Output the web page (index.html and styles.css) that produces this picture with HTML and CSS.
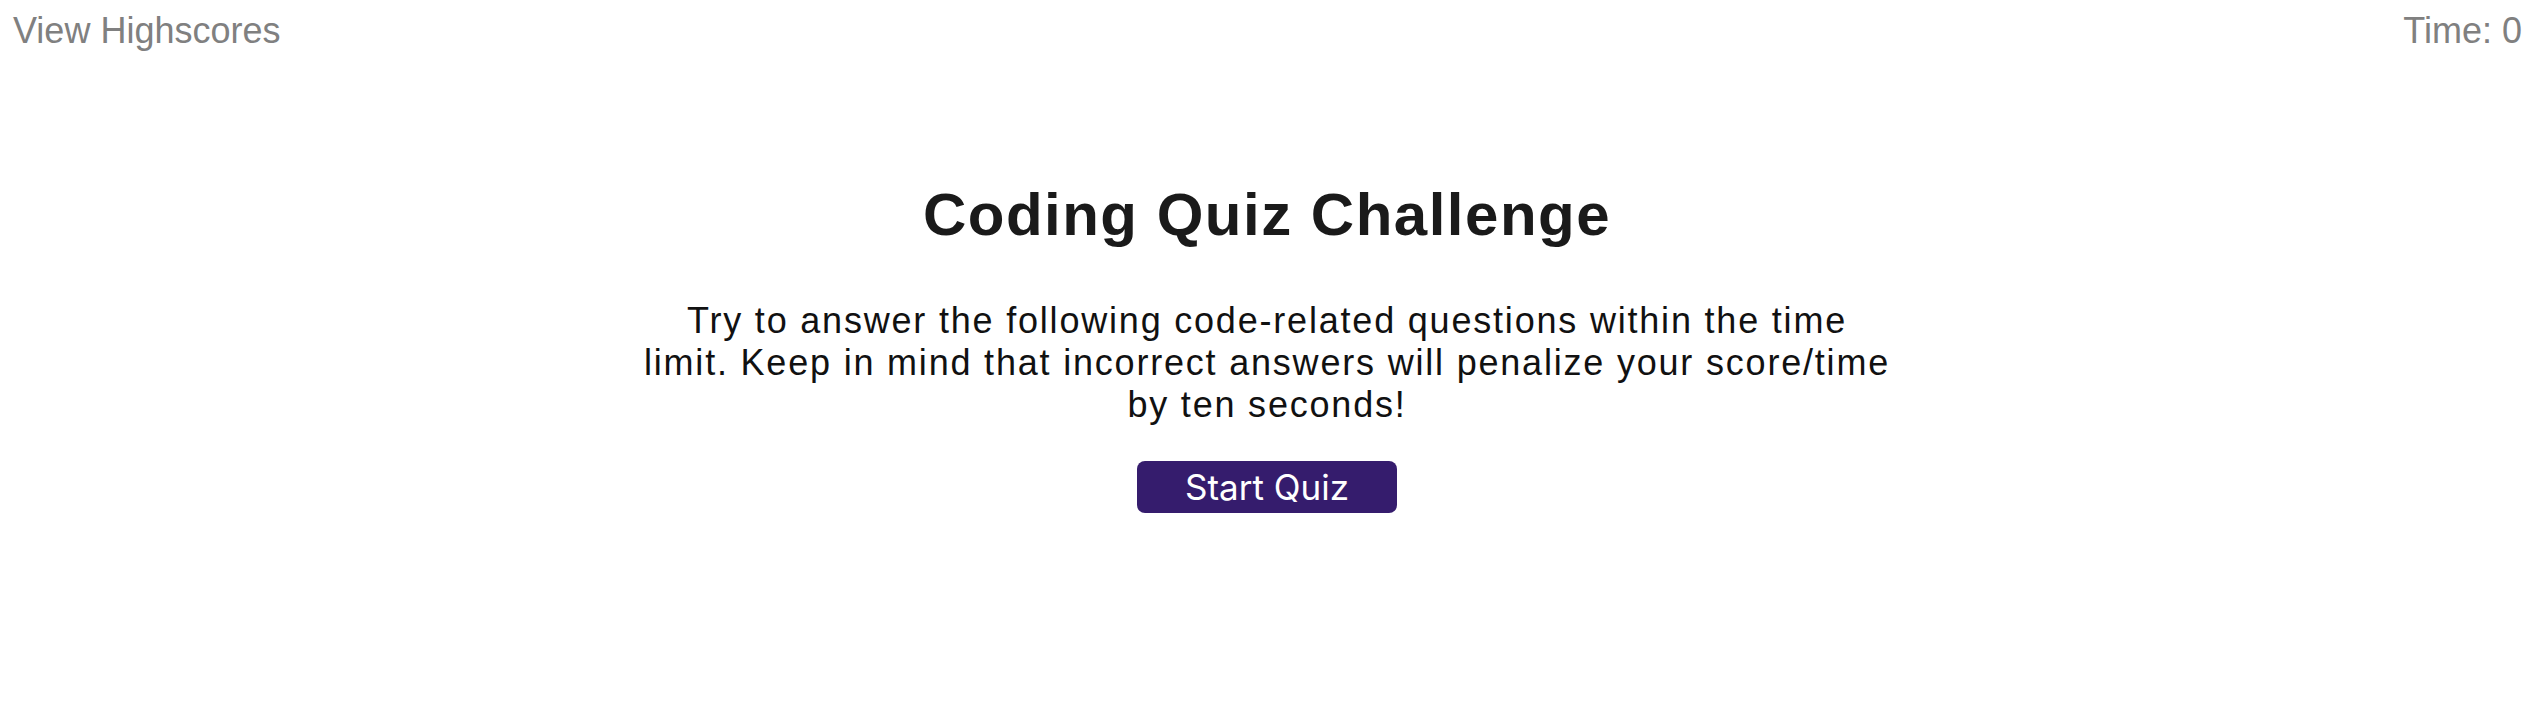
FILE: index.html
```html
<!DOCTYPE html>
<html lang="en">
<head>
<meta charset="utf-8">
<title>Coding Quiz Challenge</title>
<link rel="stylesheet" href="styles.css">
</head>
<body>
<header class="topbar">
  <a class="highscores" href="#">View Highscores</a>
  <div class="timer">Time: <span class="time-value">0</span></div>
</header>
<main class="intro">
  <h1 class="title">Coding Quiz Challenge</h1>
  <p class="lead">Try to answer the following code-related questions within the time limit. Keep in mind that incorrect answers will penalize your score/time by ten seconds!</p>
  <button class="start-btn" type="button">Start Quiz</button>
</main>
</body>
</html>
```

FILE: styles.css
```css
html, body {
  margin: 0;
  padding: 0;
  background: #ffffff;
}

body {
  font-family: "Liberation Sans", Arial, sans-serif;
  color: #1a1a1a;
}

.topbar {
  display: flex;
  justify-content: space-between;
  align-items: flex-start;
  padding: 10px 12px 0 13px;
  font-size: 36px;
  color: #808080;
}

.highscores {
  color: #808080;
  text-decoration: none;
}

.timer {
  color: #808080;
}

.intro {
  display: flex;
  flex-direction: column;
  align-items: center;
  text-align: center;
}

.title {
  margin: 129px 0 0;
  font-size: 60px;
  font-weight: 700;
  line-height: 1.149;
  letter-spacing: 1.5px;
  color: #1a1a1a;
}

.lead {
  margin: 50px 0 0;
  width: 1250px;
  font-size: 36px;
  line-height: 42px;
  letter-spacing: 1.8px;
  color: #111111;
}

.start-btn {
  margin-top: 35px;
  width: 260px;
  height: 52px;
  border: none;
  border-radius: 8px;
  background: #351c6d;
  color: #ffffff;
  font-family: Inter, "Noto Sans", sans-serif;
  font-size: 35px;
  padding: 0;
}
```
